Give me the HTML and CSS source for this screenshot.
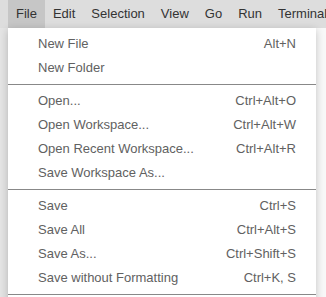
FILE: index.html
```html
<!DOCTYPE html>
<html lang="en">
<head>
  <meta charset="UTF-8" />
  <meta name="viewport" content="width=device-width, initial-scale=1.0"/>
  <title>File menu</title>
  <link rel="stylesheet" href="styles.css">
</head>
<body>

  <header class="menubar">
    <div class="menubar-item active">File</div>
    <div class="menubar-item">Edit</div>
    <div class="menubar-item">Selection</div>
    <div class="menubar-item">View</div>
    <div class="menubar-item">Go</div>
    <div class="menubar-item">Run</div>
    <div class="menubar-item">Terminal</div>
  </header>

  <div class="workbench">
    <div class="sidebar"></div>
    <div class="main"></div>
  </div>

  <ul class="menu">
    <li class="menu-item"><span>New File</span><span>Alt+N</span></li>
    <li class="menu-item"><span>New Folder</span><span></span></li>
    <li class="separator"></li>
    <li class="menu-item"><span>Open...</span><span>Ctrl+Alt+O</span></li>
    <li class="menu-item"><span>Open Workspace...</span><span>Ctrl+Alt+W</span></li>
    <li class="menu-item"><span>Open Recent Workspace...</span><span>Ctrl+Alt+R</span></li>
    <li class="menu-item"><span>Save Workspace As...</span><span></span></li>
    <li class="separator"></li>
    <li class="menu-item"><span>Save</span><span>Ctrl+S</span></li>
    <li class="menu-item"><span>Save All</span><span>Ctrl+Alt+S</span></li>
    <li class="menu-item"><span>Save As...</span><span>Ctrl+Shift+S</span></li>
    <li class="menu-item"><span>Save without Formatting</span><span>Ctrl+K, S</span></li>
    <li class="separator"></li>
  </ul>

</body>
</html>
```

FILE: styles.css
```css
* {
  margin: 0;
  padding: 0;
  box-sizing: border-box;
}

html, body {
  height: 100%;
}

body {
  font-family: "Liberation Sans", Arial, sans-serif;
  font-size: 13px;
  background: #f5f5f5;
  overflow: hidden;
  display: flex;
  flex-direction: column;
}

.menubar {
  display: flex;
  height: 28px;
  padding-left: 8px;
  background: #dddddd;
  color: #333333;
}

.menubar-item {
  padding: 0 8px;
  line-height: 28px;
  white-space: nowrap;
}

.menubar-item.active {
  background: #c6c6c6;
}

.workbench {
  flex: 1;
  display: flex;
}

.sidebar {
  width: 48px;
  background: #e4e4e4;
}

.main {
  flex: 1;
  background: #f8f8f8;
}

/* dropdown lies over the workbench */
.menu {
  position: absolute;
  top: 28px;
  left: 8px;
  width: 308px;
  padding: 4px 0;
  list-style: none;
  background: #ffffff;
  color: #616161;
  box-shadow: 0 2px 8px rgba(0, 0, 0, 0.22);
}

.menu-item {
  display: flex;
  justify-content: space-between;
  height: 24px;
  line-height: 23px;
  padding: 0 20px 0 30px;
  white-space: nowrap;
}

.separator {
  height: 9px;
  padding-top: 4px;
}

.separator::after {
  content: "";
  display: block;
  border-top: 1px solid #888888;
}
```
